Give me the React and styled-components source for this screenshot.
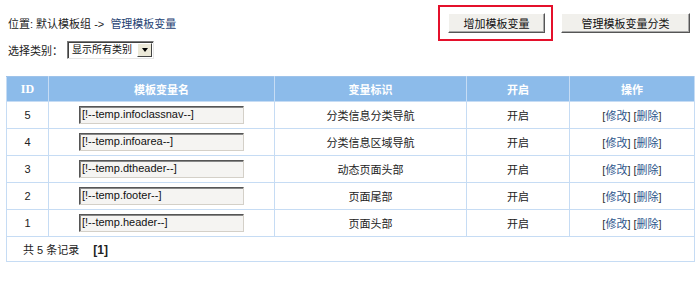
import React from "react";
import styled, { createGlobalStyle } from "styled-components";

const Global = createGlobalStyle`
  html, body { margin: 0; padding: 0; background: #fff; }
  body {
    font-family: "Liberation Sans", "Noto Sans CJK SC", sans-serif;
    font-size: 11px;
    color: #222;
  }
`;

const Page = styled.div`
  width: 700px;
  height: 285px;
  box-sizing: border-box;
  padding-top: 5px;
`;

const TopBar = styled.div`
  display: flex;
  align-items: center;
  justify-content: space-between;
  height: 36px;
  padding: 0 10px 0 8px;
`;

const Location = styled.div`
  line-height: 14px;
  padding-top: 2px;
  white-space: nowrap;
`;

const Link = styled.a`
  color: #1e3f73;
  text-decoration: none;
`;

const Actions = styled.div`
  display: flex;
  align-items: center;
  gap: 8px;
`;

const Highlight = styled.div`
  border: 2px solid #e4102b;
  padding: 6px 6px 6px 8px;
  display: flex;
`;

const Button = styled.button`
  box-sizing: border-box;
  height: 20px;
  width: ${(p) => p.$w}px;
  padding: 0;
  font-family: "Liberation Sans", "Noto Sans CJK SC", sans-serif;
  font-size: 11px;
  color: #111;
  background: #f1f0ec;
  border: 1px solid;
  border-color: #fff #555 #555 #fff;
  box-shadow: inset -1px -1px 0 #a8a8a8;
  cursor: pointer;
`;

const FilterRow = styled.div`
  display: flex;
  align-items: center;
  height: 18px;
  padding-left: 8px;
  white-space: nowrap;
`;

const FilterLabel = styled.span`
  width: 59px;
  font-family: "Noto Sans CJK SC", sans-serif;
`;

const SelectBox = styled.div`
  box-sizing: border-box;
  width: 87px;
  height: 18px;
  display: flex;
  align-items: center;
  border: 1px solid;
  border-color: #7a7a7a #e6e6e6 #e6e6e6 #7a7a7a;
  box-shadow: inset 1px 1px 0 #404040;
  background: #fff;
  padding: 1px 1px 1px 4px;
`;

const SelectText = styled.span`
  flex: 1;
  font-size: 10px;
  line-height: 14px;
  white-space: nowrap;
  color: #111;
`;

const Arrow = styled.span`
  box-sizing: border-box;
  width: 15px;
  height: 14px;
  display: flex;
  align-items: center;
  justify-content: center;
  background: #ece9d8;
  border: 1px solid;
  border-color: #fff #444 #444 #fff;
  &::after {
    content: "";
    border-left: 3px solid transparent;
    border-right: 3px solid transparent;
    border-top: 4px solid #000;
  }
`;

const Table = styled.table`
  margin: 17px 0 0 6px;
  width: 688px;
  border-collapse: collapse;
  border: 1px solid #9ec3ea;
  table-layout: fixed;
`;

const Th = styled.th`
  height: 24px;
  padding: 0;
  background: #8cbbea;
  color: #fff;
  font-weight: bold;
  border: 1px solid #c6dcf4;
  border-top-color: #9ec3ea;
  font-family: ${(p) => (p.$serif ? '"Liberation Serif", serif' : 'inherit')};
  font-size: ${(p) => (p.$serif ? '12px' : '11px')};
`;

const Td = styled.td`
  height: 26px;
  padding: 0;
  text-align: center;
  border: 1px solid #c6dcf4;
`;

const Footer = styled.td`
  height: 24px;
  padding: 0 0 0 16px;
  text-align: left;
  border: 1px solid #c6dcf4;
`;

const Pager = styled.b`
  font-size: 12px;
  margin-left: 14px;
`;

const Input = styled.div`
  box-sizing: border-box;
  width: 165px;
  height: 18px;
  margin: 0 auto;
  text-align: left;
  padding: 0 0 0 2px;
  line-height: 15px;
  font-size: 11px;
  background: #f5f4f2;
  border: 1px solid;
  border-color: #555 #d4d0c8 #d4d0c8 #555;
  box-shadow: inset 1px 1px 0 #888;
  color: #111;
  white-space: nowrap;
`;

const Op = styled.a`
  color: #2d568d;
  text-decoration: none;
`;

const Bracket = styled.span`
  color: #333;
`;

const rows = [
  { id: 5, name: "[!--temp.infoclassnav--]", label: "分类信息分类导航" },
  { id: 4, name: "[!--temp.infoarea--]", label: "分类信息区域导航" },
  { id: 3, name: "[!--temp.dtheader--]", label: "动态页面头部" },
  { id: 2, name: "[!--temp.footer--]", label: "页面尾部" },
  { id: 1, name: "[!--temp.header--]", label: "页面头部" },
];

export default function App() {
  return (
    <Page>
      <Global />
      <TopBar>
        <Location>
          位置: 默认模板组 -&gt; &nbsp;<Link href="#">管理模板变量</Link>
        </Location>
        <Actions>
          <Highlight>
            <Button $w={97}>增加模板变量</Button>
          </Highlight>
          <Button $w={129}>管理模板变量分类</Button>
        </Actions>
      </TopBar>
      <FilterRow>
        <FilterLabel>选择类别：</FilterLabel>
        <SelectBox>
          <SelectText>显示所有类别</SelectText>
          <Arrow />
        </SelectBox>
      </FilterRow>
      <Table>
        <colgroup>
          <col style={{ width: 42 }} />
          <col style={{ width: 226 }} />
          <col style={{ width: 192 }} />
          <col style={{ width: 103 }} />
          <col style={{ width: 125 }} />
        </colgroup>
        <thead>
          <tr>
            <Th $serif>ID</Th>
            <Th>模板变量名</Th>
            <Th>变量标识</Th>
            <Th>开启</Th>
            <Th>操作</Th>
          </tr>
        </thead>
        <tbody>
          {rows.map((r) => (
            <tr key={r.id}>
              <Td>{r.id}</Td>
              <Td>
                <Input>{r.name}</Input>
              </Td>
              <Td>{r.label}</Td>
              <Td>开启</Td>
              <Td>
                <Bracket>[</Bracket>
                <Op href="#">修改</Op>
                <Bracket>]</Bracket> <Bracket>[</Bracket>
                <Op href="#">删除</Op>
                <Bracket>]</Bracket>
              </Td>
            </tr>
          ))}
          <tr>
            <Footer colSpan={5}>
              共 5 条记录<Pager>[1]</Pager>
            </Footer>
          </tr>
        </tbody>
      </Table>
    </Page>
  );
}
